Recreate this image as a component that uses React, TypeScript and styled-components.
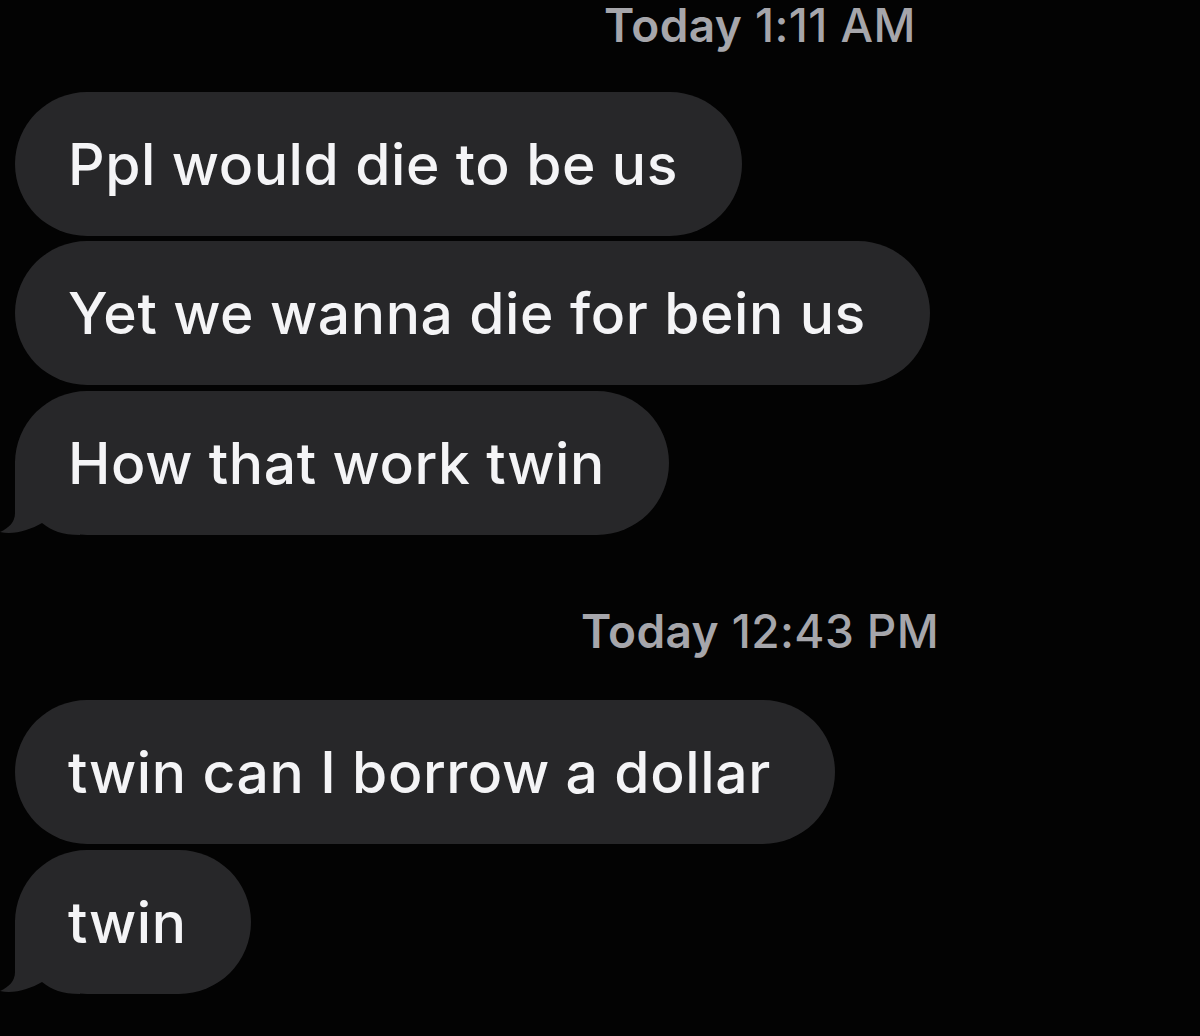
import styled, { createGlobalStyle } from 'styled-components';

const GlobalStyle = createGlobalStyle`
  html, body {
    margin: 0;
    padding: 0;
    background: #030303;
  }
  body {
    font-family: Inter, "Noto Sans", "Liberation Sans", sans-serif;
    -webkit-font-smoothing: antialiased;
  }
`;

type Item =
  | { kind: 'time'; day: string; time: string }
  | { kind: 'msg'; text: string; tail?: boolean };

const items: Item[] = [
  { kind: 'time', day: 'Today', time: '1:11 AM' },
  { kind: 'msg', text: 'Ppl would die to be us' },
  { kind: 'msg', text: 'Yet we wanna die for bein us' },
  { kind: 'msg', text: 'How that work twin', tail: true },
  { kind: 'time', day: 'Today', time: '12:43 PM' },
  { kind: 'msg', text: 'twin can I borrow a dollar' },
  { kind: 'msg', text: 'twin', tail: true },
];

const Tail = () => (
  <TailSvg width="80" height="80" viewBox="0 0 80 80">
    <path
      d="M15 6 L15 58 C15 67 9 73 0 77 C14 80 30 75 42 68 C52 76 62 80 80 80 L80 6 Z"
      fill="#272729"
    />
  </TailSvg>
);

export default function App() {
  return (
    <>
      <GlobalStyle />
      <Thread>
        {items.map((item, i) =>
          item.kind === 'time' ? (
            <Stamp key={i} $first={i === 0}>
              <Day>{item.day}</Day> {item.time}
            </Stamp>
          ) : (
            <Bubble key={i} $tail={item.tail}>
              {item.tail && <Tail />}
              <Text>{item.text}</Text>
            </Bubble>
          )
        )}
      </Thread>
    </>
  );
}

const Thread = styled.div`
  width: 1200px;
  height: 1036px;
  box-sizing: border-box;
  padding: 4px 0 0 15px;
  display: flex;
  flex-direction: column;
  align-items: flex-start;
  gap: 5px;
  overflow: hidden;
`;

const Stamp = styled.div<{ $first?: boolean }>`
  align-self: stretch;
  padding-left: 305px;
  margin: ${(p) => (p.$first ? '0 0 41px' : '70px 0 43px')};
  text-align: center;
  font-size: 46px;
  line-height: 42px;
  font-weight: 500;
  color: #a6a6ab;
  letter-spacing: 0.4px;
  white-space: nowrap;
`;

const Day = styled.span`
  font-weight: 600;
`;

const Bubble = styled.div<{ $tail?: boolean }>`
  position: relative;
  box-sizing: border-box;
  height: 144px;
  display: flex;
  align-items: center;
  padding: 0 64px 0 53px;
  border-radius: 72px;
  background: #272729;
  color: #f4f4f6;
  font-size: 57px;
  font-weight: 500;
  letter-spacing: 0.6px;
  white-space: nowrap;
  ${(p) => (p.$tail ? 'margin-top: 1px;' : '')}
`;

const Text = styled.span`
  position: relative;
`;

const TailSvg = styled.svg`
  position: absolute;
  left: -15px;
  bottom: 0;
  display: block;
`;
